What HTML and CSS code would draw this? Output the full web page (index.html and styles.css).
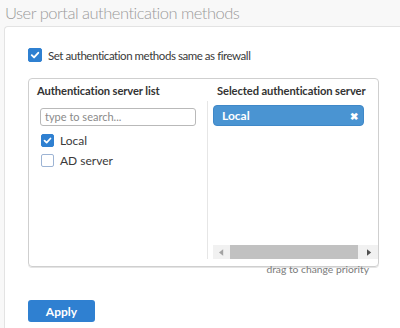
FILE: index.html
```html
<!DOCTYPE html>
<html lang="en">
<head>
    <meta charset="UTF-8">
    <meta name="viewport" content="width=device-width, initial-scale=1.0">
    <title>User portal authentication methods</title>
    <link rel="stylesheet" href="styles.css">
</head>
<body>
    <div class="page-title">User portal authentication methods</div>
    <div class="panel">
        <label class="check-row">
            <span class="check checked">
                <svg viewBox="0 0 14 14" width="14" height="14"><path d="M3.2 7.2 L5.9 9.8 L10.8 4.4" fill="none" stroke="#fff" stroke-width="2.2" stroke-linecap="round" stroke-linejoin="round"/></svg>
            </span>
            <span>Set authentication methods same as firewall</span>
        </label>

        <div class="servers">
            <div class="col col-left">
                <div class="col-head">Authentication server list</div>
                <div class="col-body">
                    <div class="search">type to search...</div>
                    <label class="item-row">
                        <span class="check checked small">
                            <svg viewBox="0 0 14 14" width="13" height="13"><path d="M3.2 7.2 L5.9 9.8 L10.8 4.4" fill="none" stroke="#fff" stroke-width="2.2" stroke-linecap="round" stroke-linejoin="round"/></svg>
                        </span>
                        <span>Local</span>
                    </label>
                    <label class="item-row">
                        <span class="check small"></span>
                        <span>AD server</span>
                    </label>
                </div>
            </div>
            <div class="col col-right">
                <div class="col-head">Selected authentication server</div>
                <div class="col-body">
                    <div class="selected">
                        <span>Local</span>
                        <span class="remove">&#10006;</span>
                    </div>
                    <div class="hscroll">
                        <span class="arrow"><svg viewBox="0 0 6 8" width="5" height="7"><path d="M5 0 L0 4 L5 8 Z" fill="#a3a3a3"/></svg></span>
                        <span class="track"><span class="thumb"></span></span>
                        <span class="arrow"><svg viewBox="0 0 6 8" width="5" height="7"><path d="M0 0 L5 4 L0 8 Z" fill="#505050"/></svg></span>
                    </div>
                </div>
            </div>
        </div>
        <div class="hint">drag to change priority</div>

        <button class="apply">Apply</button>
    </div>
</body>
</html>
```
FILE: styles.css
```css
body, html {
    margin: 0;
    padding: 0;
    font-family: Lato, "Liberation Sans", Arial, sans-serif;
    background-color: #f8f8f8;
    color: #333;
}
.page-title {
    font-size: 16.5px;
    font-weight: 300;
    color: #9b9b9b;
    letter-spacing: -0.5px;
    padding: 2px 0 0 5px;
    height: 24px;
    line-height: 22px;
    white-space: nowrap;
}
.panel {
    margin-left: 4px;
    background-color: #fff;
    border: 1px solid #e3e3e3;
    border-right: none;
    border-bottom: none;
    border-radius: 4px 0 0 0;
    padding: 21px 0 0 23px;
    height: 310px;
    box-sizing: border-box;
}
.check-row {
    display: flex;
    align-items: center;
    gap: 6px;
    font-size: 11.5px;
    letter-spacing: -0.45px;
    color: #3a3a3a;
    white-space: nowrap;
}
.check {
    width: 14px;
    height: 14px;
    border-radius: 2px;
    box-sizing: border-box;
    display: flex;
    align-items: center;
    justify-content: center;
    border: 1px solid #9db4d4;
    background-color: #fff;
    flex: none;
}
.check.checked {
    background-color: #2f80d1;
    border-color: #2f80d1;
}
.check.small {
    width: 13px;
    height: 13px;
}
.servers {
    margin-top: 16px;
    width: 351px;
    height: 189px;
    border: 1px solid #cfcfcf;
    border-radius: 4px;
    box-shadow: 0 1px 0 #e4e4e4;
    box-sizing: border-box;
    display: flex;
}
.col {
    display: flex;
    flex-direction: column;
}
.col-left {
    width: 178px;
}
.col-right {
    flex: 1;
}
.col-head {
    height: 22px;
    line-height: 24px;
    font-size: 11.2px;
    font-weight: 700;
    letter-spacing: -0.1px;
    color: #333;
    white-space: nowrap;
}
.col-left .col-head {
    padding-left: 8px;
}
.col-right .col-head {
    padding-left: 10px;
}
.col-body {
    height: 158px;
}
.col-left .col-body {
    padding: 7px 0 0 11px;
    box-sizing: border-box;
}
.col-right .col-body {
    border-left: 1px solid #e6e6e6;
    padding: 4px 0 0 5px;
    box-sizing: border-box;
    display: flex;
    flex-direction: column;
}
.search {
    width: 156px;
    height: 18px;
    box-sizing: border-box;
    border: 1px solid #b9b9b9;
    border-radius: 3px;
    font-size: 11px;
    color: #8a8a8a;
    line-height: 16px;
    padding-left: 4px;
}
.item-row {
    display: flex;
    align-items: center;
    gap: 6px;
    font-size: 12px;
    color: #3a3a3a;
    margin: 8px 0 0 1px;
    height: 13px;
}
.item-row + .item-row {
    margin-top: 7px;
}
.selected {
    width: 151px;
    height: 21px;
    box-sizing: border-box;
    background-color: #4a94d2;
    border: 1px solid #3f88c8;
    border-radius: 4px;
    color: #fff;
    font-size: 12px;
    font-weight: 700;
    display: flex;
    align-items: center;
    justify-content: space-between;
    padding: 0 5px 0 8px;
}
.remove {
    font-size: 10px;
}
.hscroll {
    margin-top: auto;
    height: 14px;
    background-color: #f1f1f1;
    display: flex;
    align-items: center;
}
.arrow {
    width: 17px;
    display: flex;
    justify-content: center;
}
.track {
    flex: 1;
    height: 14px;
    display: flex;
    align-items: center;
}
.thumb {
    width: 128px;
    height: 14px;
    background-color: #c1c1c1;
}
.hint {
    width: 351px;
    text-align: right;
    padding-right: 10px;
    box-sizing: border-box;
    font-size: 10.3px;
    line-height: 12px;
    color: #7a7a7a;
    margin-top: -4px;
}
.apply {
    display: block;
    margin-top: 25px;
    width: 67px;
    height: 22px;
    border: none;
    border-radius: 3px;
    background-color: #2f80d1;
    color: #fff;
    font-family: inherit;
    font-size: 12px;
    font-weight: 700;
    padding: 0;
}
```
